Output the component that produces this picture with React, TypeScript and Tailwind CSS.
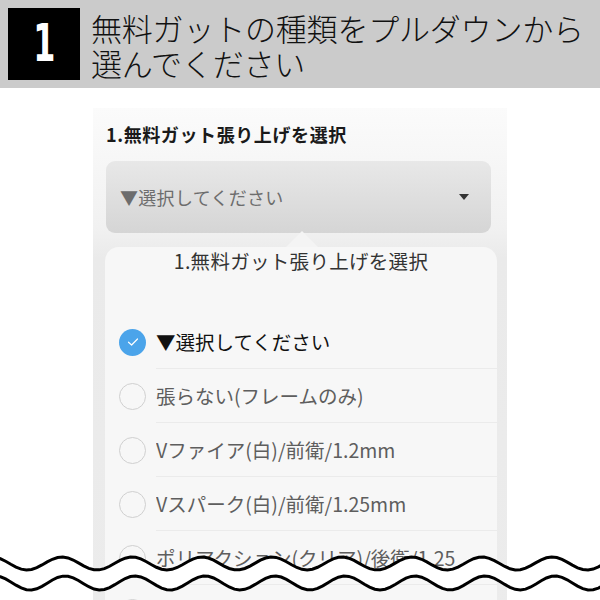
import React from 'react';

const JP = { fontFamily: '"Noto Sans CJK JP", "Noto Sans", sans-serif' };

const OPTIONS = [
    '▼選択してください',
    '張らない(フレームのみ)',
    'Vファイア(白)/前衛/1.2mm',
    'Vスパーク(白)/前衛/1.25mm',
    'ポリアクション(クリア)/後衛/1.25mm',
    'ポリアクション(黒)/後衛/1.25mm',
];

// wavy "cut" mark at the bottom of the picture
const wave = (mid: number, amp: number, phase: number, reverse = false) => {
    const pts: string[] = [];
    for (let i = 0; i <= 120; i++) {
        const x = -10 + i * 5.2;
        const y = mid + amp * Math.cos((2 * Math.PI * (x - phase)) / 70);
        pts.push(`${x.toFixed(1)},${y.toFixed(2)}`);
    }
    if (reverse) pts.reverse();
    return pts;
};

const CutMark: React.FC = () => {
    const top = wave(13.5, 6.5, 27);
    const bottom = wave(33, 7, 30);
    const band = [...top, ...wave(33, 7, 30, true)];
    return (
        <svg className="absolute left-0 bottom-0" width="600" height="50" viewBox="0 0 600 50">
            <polygon points={band.join(' ')} fill="#fff" />
            <polyline points={top.join(' ')} fill="none" stroke="#000" strokeWidth="3" />
            <polyline points={bottom.join(' ')} fill="none" stroke="#000" strokeWidth="3" />
        </svg>
    );
};

const Radio: React.FC<{ checked: boolean }> = ({ checked }) =>
    checked ? (
        <span className="w-[27px] h-[27px] rounded-full bg-[#4ba4ea] flex items-center justify-center shrink-0">
            <svg width="14" height="14" viewBox="0 0 14 14">
                <path d="M2.5 7.2 L5.6 10 L11.5 4" fill="none" stroke="#fff" strokeWidth="1.2" strokeLinecap="round" strokeLinejoin="round" />
            </svg>
        </span>
    ) : (
        <span className="w-[27px] h-[27px] rounded-full border-[1.5px] border-[#d0d0d0] shrink-0" />
    );

const App: React.FC = () => {
    return (
        <div className="w-[600px] h-[600px] overflow-hidden relative bg-white" style={JP}>
            <div className="h-[88px] bg-[#cbcbcb] flex items-center px-2 gap-[11px]">
                <div className="w-[72px] h-[72px] bg-black flex items-center justify-center">
                    <span
                        className="text-white font-bold text-[52px] leading-none scale-x-[0.68] -mt-[3px]"
                        style={{ fontFamily: '"DejaVu Sans Condensed", "DejaVu Sans", sans-serif' }}
                    >
                        1
                    </span>
                </div>
                <div className="text-[31px] leading-[35px] font-light text-[#111] tracking-[-0.2px] mt-px">
                    <div>無料ガットの種類をプルダウンから</div>
                    <div>選んでください</div>
                </div>
            </div>

            <div className="ml-[93px] mt-[20px] w-[414px] h-[520px] bg-[linear-gradient(#fbfbfb,#f1f1f1_120px,#eaeaea_150px,#ececec)] pt-[13px]">
                <div className="pl-[13px] text-[18px] leading-[26px] font-bold text-[#1a1a1a] tracking-[0.6px]">
                    1.無料ガット張り上げを選択
                </div>

                <div className="ml-[13px] mt-[14px] w-[385px] h-[72px] rounded-[9px] bg-gradient-to-b from-[#e8e8e8] to-[#d5d5d5] flex items-center justify-between pl-[14px] pr-[22px]">
                    <span className="text-[18px] text-[#6d6d6d] tracking-[0.3px]">▼選択してください</span>
                    <span className="w-0 h-0 border-l-[5px] border-r-[5px] border-t-[6px] border-l-transparent border-r-transparent border-t-[#333]" />
                </div>

                <div className="relative ml-[12px] mt-[14px] w-[392px] h-[400px] rounded-t-[14px] bg-[#f7f7f7]">
                    <span className="absolute left-[181px] -top-[16px] w-0 h-0 border-l-[16px] border-r-[16px] border-b-[16px] border-l-transparent border-r-transparent border-b-[#f4f4f4]" />
                    <div className="pt-px text-center text-[19.5px] leading-[26px] text-[#333] tracking-[0.3px]">
                        1.無料ガット張り上げを選択
                    </div>
                    <div className="mt-[41px]">
                        {OPTIONS.map((opt, i) => (
                            <div key={opt} className="h-[54px] flex items-center pl-[14px] gap-[10px]">
                                <Radio checked={i === 0} />
                                <div className={`flex-1 h-full flex items-center whitespace-nowrap ${i < OPTIONS.length - 1 ? 'border-b border-[#ebebeb]' : ''}`}>
                                    <span className={`max-w-[299px] overflow-hidden text-[19.5px] ${i === 0 ? 'text-[#111]' : 'text-[#5e5e5e]'}`}>{opt}</span>
                                </div>
                            </div>
                        ))}
                    </div>
                </div>
            </div>

            <CutMark />
        </div>
    );
};

export default App;
